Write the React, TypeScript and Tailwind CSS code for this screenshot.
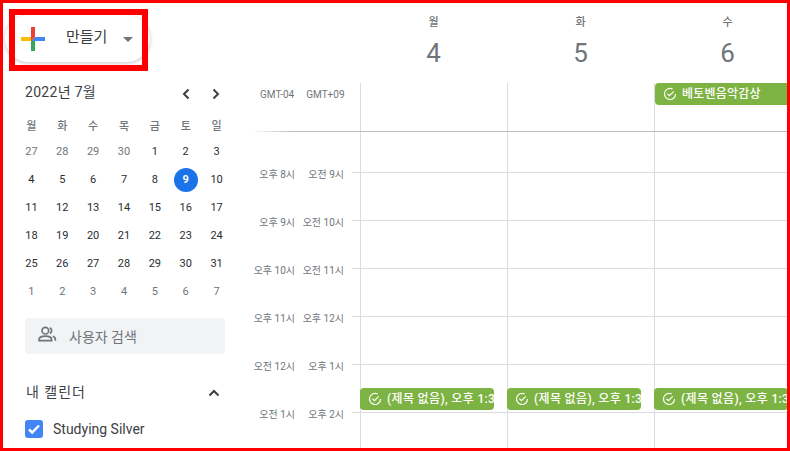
const font = { fontFamily: '"Roboto","Noto Sans CJK KR",sans-serif' };

const calendarRows = [
  ["27", "28", "29", "30", "1", "2", "3"],
  ["4", "5", "6", "7", "8", "9", "10"],
  ["11", "12", "13", "14", "15", "16", "17"],
  ["18", "19", "20", "21", "22", "23", "24"],
  ["25", "26", "27", "28", "29", "30", "31"],
  ["1", "2", "3", "4", "5", "6", "7"],
];

const dows = ["월", "화", "수", "목", "금", "토", "일"];

const times = [
  ["오후 8시", "오전 9시"],
  ["오후 9시", "오전 10시"],
  ["오후 10시", "오전 11시"],
  ["오후 11시", "오후 12시"],
  ["오전 12시", "오후 1시"],
  ["오전 1시", "오후 2시"],
];

function CheckCircle() {
  return (
    <svg width="14" height="14" viewBox="0 0 24 24" fill="none" stroke="white" strokeWidth="2" className="shrink-0">
      <path d="M21.5 12A9.5 9.5 0 1 1 16.5 3.6" />
      <path d="M7.5 11.5l3.5 3.5 7.500-7.500" />
    </svg>
  );
}

function Chev({ d }: { d: string }) {
  return (
    <svg width="20" height="20" viewBox="0 0 20 20" fill="none" stroke="#3c4043" strokeWidth="2">
      <path d={d} />
    </svg>
  );
}

function Chip({ text, className }: { text: string; className: string }) {
  return (
    <div className={`absolute flex items-center h-[22px] rounded-[4px] bg-[#7cb342] text-white text-[12px] font-medium pl-[8px] gap-[5px] overflow-hidden whitespace-nowrap ${className}`}>
      <CheckCircle />
      <span className="-mt-[1px]">{text}</span>
    </div>
  );
}

export default function App() {
  return (
    <div style={font} className="relative flex w-[790px] h-[451px] border-[3px] border-[#ff0000] bg-white overflow-hidden">
      {/* sidebar */}
      <div className="w-[242px] shrink-0 flex flex-col">
        <div className="ml-[2px] mt-[12px] w-[145px] h-[47px] rounded-full bg-white shadow-[0_1px_3px_1px_rgba(60,64,67,0.2)] flex items-center pl-[10px]">
          <svg width="36" height="36" viewBox="0 0 36 36">
            <path fill="#34A853" d="M16 16v14h4V20z" />
            <path fill="#4285F4" d="M30 16H20l-4 4h14z" />
            <path fill="#FBBC05" d="M6 16v4h10l4-4z" />
            <path fill="#EA4335" d="M20 16V6h-4v14z" />
          </svg>
          <span className="ml-[15px] -mt-[2px] text-[15px] text-[#3c4043]">만들기</span>
          <span className="ml-[16px] mt-[2px] w-0 h-0 border-x-[5px] border-x-transparent border-t-[5px] border-t-[#70757a]" />
        </div>
        <div className="ml-[22px] mt-[16px] w-[201px] flex items-center h-[28px]">
          <span className="mt-[1px] text-[14px] text-[#3c4043] tracking-[0.3px]">2022년 7월</span>
          <div className="ml-auto mt-[3px] flex gap-[10px]">
            <Chev d="M12.5 5.5L8 10l4.5 4.5" />
            <Chev d="M7.5 5.5L12 10l-4.5 4.5" />
          </div>
        </div>
        <div className="ml-[13px] mt-[11px] w-[216px] grid grid-cols-7 text-center text-[11px]">
          {dows.map((d) => (
            <div key={d} className="h-[20px] flex items-center justify-center text-[#70757a] font-medium">{d}</div>
          ))}
          {calendarRows.map((r, i) =>
            r.map((n, j) => {
              const muted = (i === 0 && j < 4) || i === 5;
              const sel = i === 1 && j === 5;
              return (
                <div key={`${i}-${j}`} className={`h-[28px] flex items-center justify-center ${i === 0 ? "mt-[1px]" : ""}`}>
                  <span className={`w-[24px] h-[24px] rounded-full flex items-center justify-center ${sel ? "bg-[#1a73e8] text-white font-bold" : muted ? "text-[#70757a]" : "text-[#2a2d30]"}`}>{n}</span>
                </div>
              );
            })
          )}
        </div>
        <div className="ml-[22px] mt-[12px] w-[200px] h-[36px] shrink-0 rounded-[4px] bg-[#f1f3f4] flex items-center pl-[12px]">
          <svg width="20" height="20" viewBox="0 0 24 24" fill="none" stroke="#70757a" strokeWidth="2" className="mt-[-5px]">
            <circle cx="10" cy="8" r="4" />
            <path d="M2.5 20v-1.5C2.5 16 6 14.5 10 14.5s7.5 1.500 7.500 4V20z" />
            <path d="M15.5 4.500a4 4 0 0 1 0 7M19 14.800c2 .7 3 2 3 3.700V20" />
          </svg>
          <span className="ml-[12px] mt-[2px] text-[14px] text-[#70757a]">사용자 검색</span>
        </div>
        <div className="ml-[23px] mt-[27px] w-[196px] flex items-center h-[22px]">
          <span className="text-[14px] text-[#3c4043] tracking-[1px]">내 캘린더</span>
          <svg width="16" height="16" viewBox="0 0 16 16" fill="none" stroke="#3c4043" strokeWidth="2" className="ml-auto mt-[2px]">
            <path d="M3.500 10.500L8 6l4.500 4.500" />
          </svg>
        </div>
        <div className="ml-[22px] mt-[17px] flex items-center h-[18px] shrink-0">
          <span className="w-[18px] h-[18px] rounded-[3px] bg-[#4285f4] flex items-center justify-center">
            <svg width="14" height="14" viewBox="0 0 14 14" fill="none" stroke="white" strokeWidth="2.4">
              <path d="M2 7.500l3.200 3L12 3.500" />
            </svg>
          </span>
          <span className="ml-[10px] text-[14px] text-[#3c4043]">Studying Silver</span>
        </div>
      </div>

      {/* main */}
      <div className="flex-1 min-w-0 flex flex-col relative">
        {/* day headings */}
        <div className="flex h-[80px] shrink-0">
          <div className="w-[115px] shrink-0" />
          {[["월", "4"], ["화", "5"], ["수", "6"]].map(([d, n]) => (
            <div key={d} className="w-[147px] shrink-0 flex flex-col items-center">
              <span className="mt-[13px] text-[11px] font-medium text-[#70757a] leading-[14px]">{d}</span>
              <span className="mt-[8px] text-[26px] text-[#70757a] leading-[30px]">{n}</span>
            </div>
          ))}
        </div>
        {/* all day row */}
        <div className="flex h-[48px] shrink-0 relative">
          <div className="w-[115px] shrink-0 flex pt-[5px] text-[10px] text-[#70757a] leading-[14px]">
            <span className="ml-[15px]">GMT-04</span>
            <span className="ml-[12px]">GMT+09</span>
          </div>
          {[0, 1, 2].map((i) => (
            <div key={i} className="w-[147px] shrink-0 border-l border-[#dadce0]" />
          ))}
          <Chip text="베토벤음악감상" className="left-[410px] top-0 w-[140px] rounded-r-none tracking-[0.2px]" />
        </div>
        <div className="h-px shrink-0 ml-[6px] bg-gradient-to-r from-white to-[#bdbdbd] to-[8%]" />
        {/* time rows */}
        <div className="h-[40px] shrink-0 flex">
          <div className="w-[115px] shrink-0" />
          {[0, 1, 2].map((i) => (
            <div key={i} className="w-[147px] shrink-0 border-l border-[#dadce0]" />
          ))}
        </div>
        {times.map(([a, b], idx) => (
          <div key={idx} className="h-[48px] shrink-0 flex relative">
            <div className="w-[115px] shrink-0 flex text-[10px] text-[#70757a] leading-[14px] whitespace-nowrap">
              <span className="w-[50px] text-right -mt-[4px]">{a}</span>
              <span className="w-[49px] text-right -mt-[4px]">{b}</span>
              <span className="ml-[8px] flex-1 border-t border-[#dadce0]" />
            </div>
            {[0, 1, 2].map((i) => (
              <div key={i} className="w-[147px] shrink-0 border-l border-t border-[#dadce0]" />
            ))}
            {idx === 4 && (
              <>
                <Chip text="(제목 없음), 오후 1:3" className="left-[115px] top-[24px] w-[134px] tracking-[0.35px]" />
                <Chip text="(제목 없음), 오후 1:3" className="left-[262px] top-[24px] w-[134px] tracking-[0.35px]" />
                <Chip text="(제목 없음), 오후 1:3" className="left-[409px] top-[24px] w-[134px] tracking-[0.35px]" />
              </>
            )}
          </div>
        ))}
      </div>

      {/* annotation rectangle */}
      <div className="absolute left-[6px] top-[6px] w-[139px] h-[62px] border-[6px] border-[#ff0000]" />
    </div>
  );
}
